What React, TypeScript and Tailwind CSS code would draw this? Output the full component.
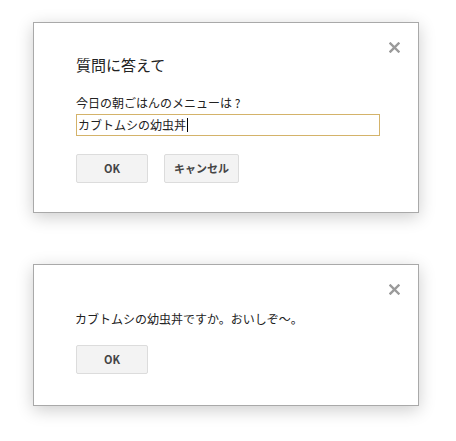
import React from "react";

const font = { fontFamily: '"Noto Sans CJK JP", "Noto Sans", sans-serif' };

function CloseX() {
  return (
    <svg
      className="absolute top-[19px] right-[18px]"
      width="11"
      height="11"
      viewBox="0 0 11 11"
    >
      <path d="M1.5 1.5 L9.5 9.5 M9.5 1.5 L1.5 9.5" stroke="#9a9a9a" strokeWidth="2.4" strokeLinecap="square" />
    </svg>
  );
}

function Btn({ children }: { children: React.ReactNode }) {
  return (
    <button className="h-[29px] min-w-[72px] px-[9px] rounded-[2px] border border-[#dcdcdc] bg-[#f3f3f3] text-[11px] font-bold text-[#444] leading-none">
      {children}
    </button>
  );
}

export default function App() {
  return (
    <div className="w-[456px] h-[441px] bg-white overflow-hidden text-[#222]" style={font}>
      <div className="relative ml-[33px] mt-[22px] w-[386px] border border-[#a9a9a9] bg-white shadow-[0_4px_16px_rgba(0,0,0,0.2)] pl-[42px] pt-[32px] pb-[29px]">
        <CloseX />
        <div className="text-[15px] leading-[20px]">質問に答えて</div>
        <div className="mt-[20px] text-[12px] leading-[16px]">今日の朝ごはんのメニューは&nbsp;?</div>
        <div className="mt-[3px] w-[304px] h-[22px] border border-[#d4b36a] flex items-center pl-[1px] text-[12px] leading-[16px]">
          <span>カブトムシの幼虫丼</span>
          <span className="inline-block w-px h-[14px] bg-black ml-px" />
        </div>
        <div className="mt-[18px] flex gap-[16px]">
          <Btn>OK</Btn>
          <Btn>キャンセル</Btn>
        </div>
      </div>
      <div className="relative ml-[33px] mt-[51px] w-[386px] border border-[#a9a9a9] bg-white shadow-[0_4px_16px_rgba(0,0,0,0.2)] pl-[41px] pt-[46px] pb-[31px]">
        <CloseX />
        <div className="text-[12px] leading-[16px]">カブトムシの幼虫丼ですか。おいしぞ〜。</div>
        <div className="mt-[18px] flex pl-px">
          <Btn>OK</Btn>
        </div>
      </div>
    </div>
  );
}
